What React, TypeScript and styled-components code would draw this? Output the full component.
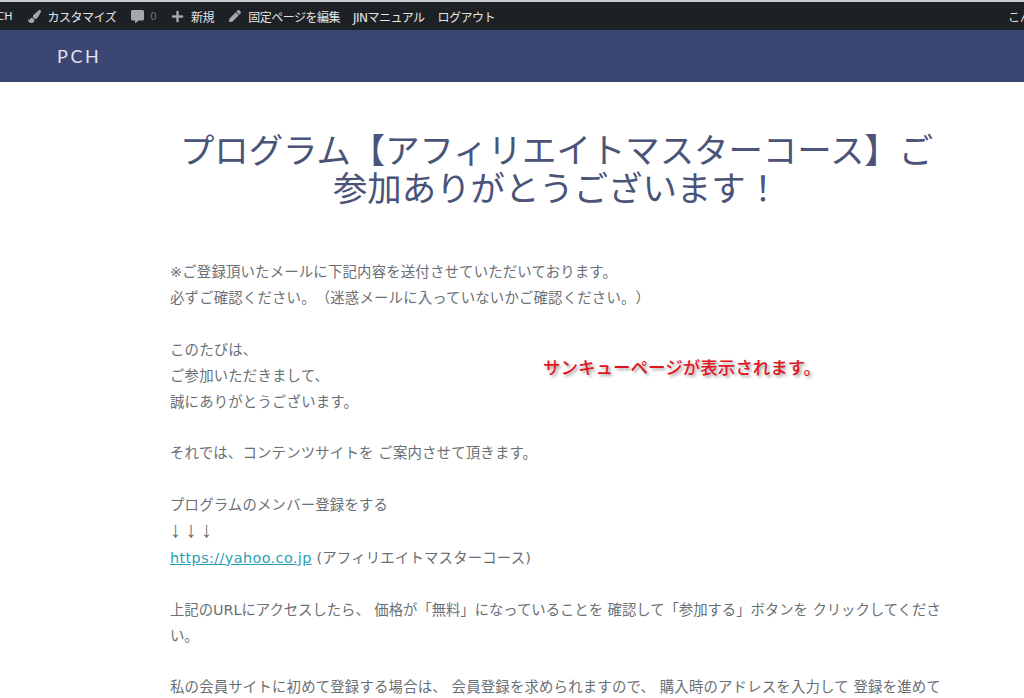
import { createGlobalStyle, styled } from "styled-components";
import { FaCommentAlt, FaPaintBrush, FaPen, FaPlus } from "react-icons/fa";

const GlobalStyle = createGlobalStyle`
  html, body {
    margin: 0;
    padding: 0;
    background: #fff;
    height: 698px;
    overflow: hidden;
  }
  body {
    font-family: "DejaVu Sans", "Noto Sans CJK JP", sans-serif;
    text-spacing-trim: space-all;
  }
`;

const App = () => {
  return (
    <Page>
      <GlobalStyle />
      <AdminBar>
        <AdminMenu>
          <SiteName>PCH</SiteName>
          <AdminItem>
            <FaPaintBrush size={13} />
            カスタマイズ
          </AdminItem>
          <CommentItem>
            <FaCommentAlt size={13} />
            <CommentCount>0</CommentCount>
          </CommentItem>
          <AdminItem>
            <FaPlus size={13} />
            新規
          </AdminItem>
          <AdminItem>
            <FaPen size={12} />
            固定ページを編集
          </AdminItem>
          <AdminItem>JINマニュアル</AdminItem>
          <AdminItem>ログアウト</AdminItem>
        </AdminMenu>
        <Greeting>こんにちは</Greeting>
      </AdminBar>
      <Header>
        <Logo>PCH</Logo>
      </Header>
      <Main>
        <Title>プログラム【アフィリエイトマスターコース】ご参加ありがとうございます！</Title>
        <Paragraph>
          ※ご登録頂いたメールに下記内容を送付させていただいております。
          <br />
          必ずご確認ください。（迷惑メールに入っていないかご確認ください。）
        </Paragraph>
        <Paragraph>
          このたびは、
          <br />
          ご参加いただきまして、
          <br />
          誠にありがとうございます。
        </Paragraph>
        <Paragraph>それでは、コンテンツサイトを ご案内させて頂きます。</Paragraph>
        <Paragraph>
          プログラムのメンバー登録をする
          <br />
          <Arrows>↓↓↓</Arrows>
          <br />
          <Link href="#">https://yahoo.co.jp</Link> (アフィリエイトマスターコース)
        </Paragraph>
        <Paragraph $tight>
          上記のURLにアクセスしたら、 価格が「無料」になっていることを 確認して「参加する」ボタンを クリックしてください。
        </Paragraph>
        <Paragraph>
          私の会員サイトに初めて登録する場合は、 会員登録を求められますので、 購入時のアドレスを入力して 登録を進めてください。
        </Paragraph>
      </Main>
      <Caption>サンキューページが表示されます。</Caption>
    </Page>
  );
};

const Page = styled.div`
  position: relative;
  width: 1024px;
  height: 698px;
  overflow: hidden;
  background: #fff;
`;

const AdminBar = styled.div`
  box-sizing: border-box;
  height: 30px;
  border-top: 2px solid #c9cbcc;
  background: #1d2126;
  color: #e4e6e8;
  font-size: 12px;
  display: flex;
  align-items: center;
  justify-content: space-between;
`;

const AdminMenu = styled.div`
  display: flex;
  align-items: center;
  gap: 13px;
  margin-left: -10px;
`;

const SiteName = styled.span`
  font-size: 11px;
`;

const AdminItem = styled.span`
  display: flex;
  align-items: center;
  gap: 7px;
  letter-spacing: -0.5px;

  &:has(svg) {
    margin-left: 2px;
  }

  svg {
    color: #a4a8ad;
  }
`;

const CommentItem = styled(AdminItem)`
  color: #6f7479;
  font-size: 10px;
`;

const CommentCount = styled.span`
  margin-left: -1px;
`;

const Greeting = styled.span`
  white-space: nowrap;
  margin-right: -44px;
`;

const Header = styled.header`
  height: 52px;
  background: #3c4673;
  display: flex;
  align-items: center;
  padding-left: 57px;
`;

const Logo = styled.div`
  font-family: "Lato", sans-serif;
  font-size: 18px;
  letter-spacing: 2.6px;
  color: #e2e4ee;
`;

const Main = styled.main`
  box-sizing: border-box;
  width: 773px;
  margin-left: 170px;
  padding-top: 50px;
  color: #6a6f75;
  font-size: 14.4px;
  line-height: 25.9px;
`;

const Title = styled.h1`
  margin: 0 -2px 52px;
  color: #4a5378;
  font-size: 34.4px;
  font-weight: 400;
  line-height: 38px;
  text-align: center;
`;

const Paragraph = styled.p<{ $tight?: boolean }>`
  margin: 0 0 25.9px;
  letter-spacing: ${(props) => (props.$tight ? "-0.05px" : "0.18px")};
`;

const Arrows = styled.span`
  font-family: "Liberation Sans", sans-serif;
  font-size: 22px;
  line-height: 1;
  letter-spacing: 4.5px;
`;

const Link = styled.a`
  color: #2b9fb5;
  text-decoration: underline;
  letter-spacing: 0.4px;
`;

const Caption = styled.div`
  position: absolute;
  left: 543px;
  top: 356px;
  color: #e0161e;
  font-size: 17.5px;
  font-weight: 500;
  line-height: 24px;
  white-space: nowrap;
  text-shadow: 2px 2px 3px rgba(90, 90, 90, 0.55), 0 0 2px #fff;
`;

export default App;
